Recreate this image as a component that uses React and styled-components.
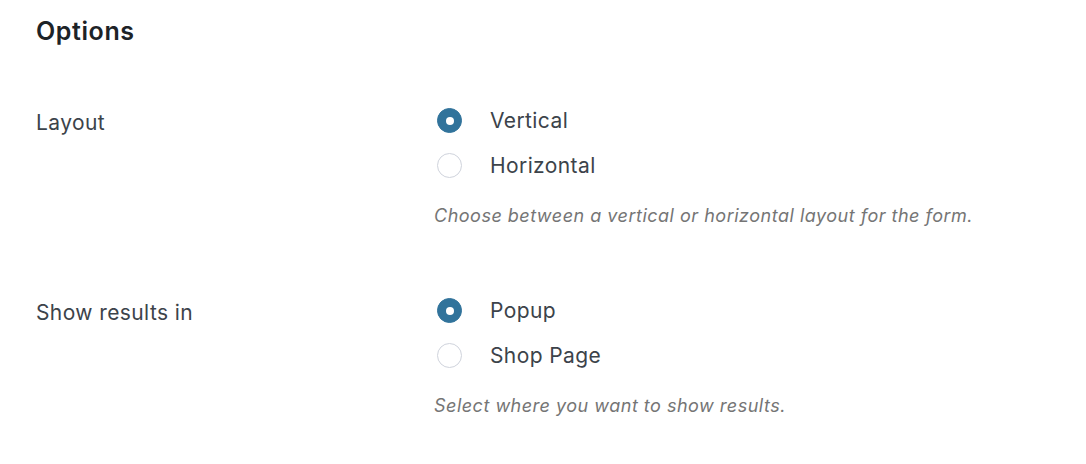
import React, { useState } from "react";
import styled, { createGlobalStyle } from "styled-components";

const GlobalStyle = createGlobalStyle`
  body {
    margin: 0;
    background: #ffffff;
    font-family: Inter, "Noto Sans", sans-serif;
  }
`;

const Page = styled.div`
  padding: 16px 37px 0 36px;
`;

const Heading = styled.h2`
  margin: 0 0 52px;
  font-size: 25px;
  line-height: 30px;
  font-weight: 600;
  color: #1d2327;
  letter-spacing: 0.6px;
`;

const Row = styled.div`
  display: grid;
  grid-template-columns: 401px 1fr;
  margin-bottom: 60px;
`;

const Label = styled.div`
  padding-top: 2px;
  font-size: 21px;
  line-height: 45px;
  letter-spacing: 0.4px;
  color: #3c434a;
`;

const Field = styled.div`
  display: flex;
  flex-direction: column;
`;

const Option = styled.label`
  display: flex;
  align-items: center;
  gap: 28px;
  height: 45px;
  font-size: 21px;
  letter-spacing: 0.4px;
  color: #3c434a;
  cursor: pointer;
`;

const Radio = styled.span`
  box-sizing: border-box;
  flex-shrink: 0;
  width: 25px;
  height: 25px;
  border-radius: 50%;
  display: flex;
  align-items: center;
  justify-content: center;
  background: ${({ checked }) => (checked ? "#31739b" : "#ffffff")};
  border: 1px solid ${({ checked }) => (checked ? "#31739b" : "#cfd3dc")};
  &::after {
    content: "";
    width: 8px;
    height: 8px;
    border-radius: 50%;
    background: #ffffff;
    display: ${({ checked }) => (checked ? "block" : "none")};
  }
`;

const Description = styled.p`
  margin: 16px 0 0 -3px;
  font-size: 18px;
  line-height: 24px;
  font-style: italic;
  color: #757575;
  letter-spacing: 0.5px;
`;

function RadioGroup({ options, value, onChange }) {
  return options.map((opt) => (
    <Option key={opt} onClick={() => onChange(opt)}>
      <Radio checked={value === opt} />
      {opt}
    </Option>
  ));
}

export default function App() {
  const [layout, setLayout] = useState("Vertical");
  const [results, setResults] = useState("Popup");

  return (
    <Page>
      <GlobalStyle />
      <Heading>Options</Heading>
      <Row>
        <Label>Layout</Label>
        <Field>
          <RadioGroup
            options={["Vertical", "Horizontal"]}
            value={layout}
            onChange={setLayout}
          />
          <Description>
            Choose between a vertical or horizontal layout for the form.
          </Description>
        </Field>
      </Row>
      <Row>
        <Label>Show results in</Label>
        <Field>
          <RadioGroup
            options={["Popup", "Shop Page"]}
            value={results}
            onChange={setResults}
          />
          <Description>Select where you want to show results.</Description>
        </Field>
      </Row>
    </Page>
  );
}
